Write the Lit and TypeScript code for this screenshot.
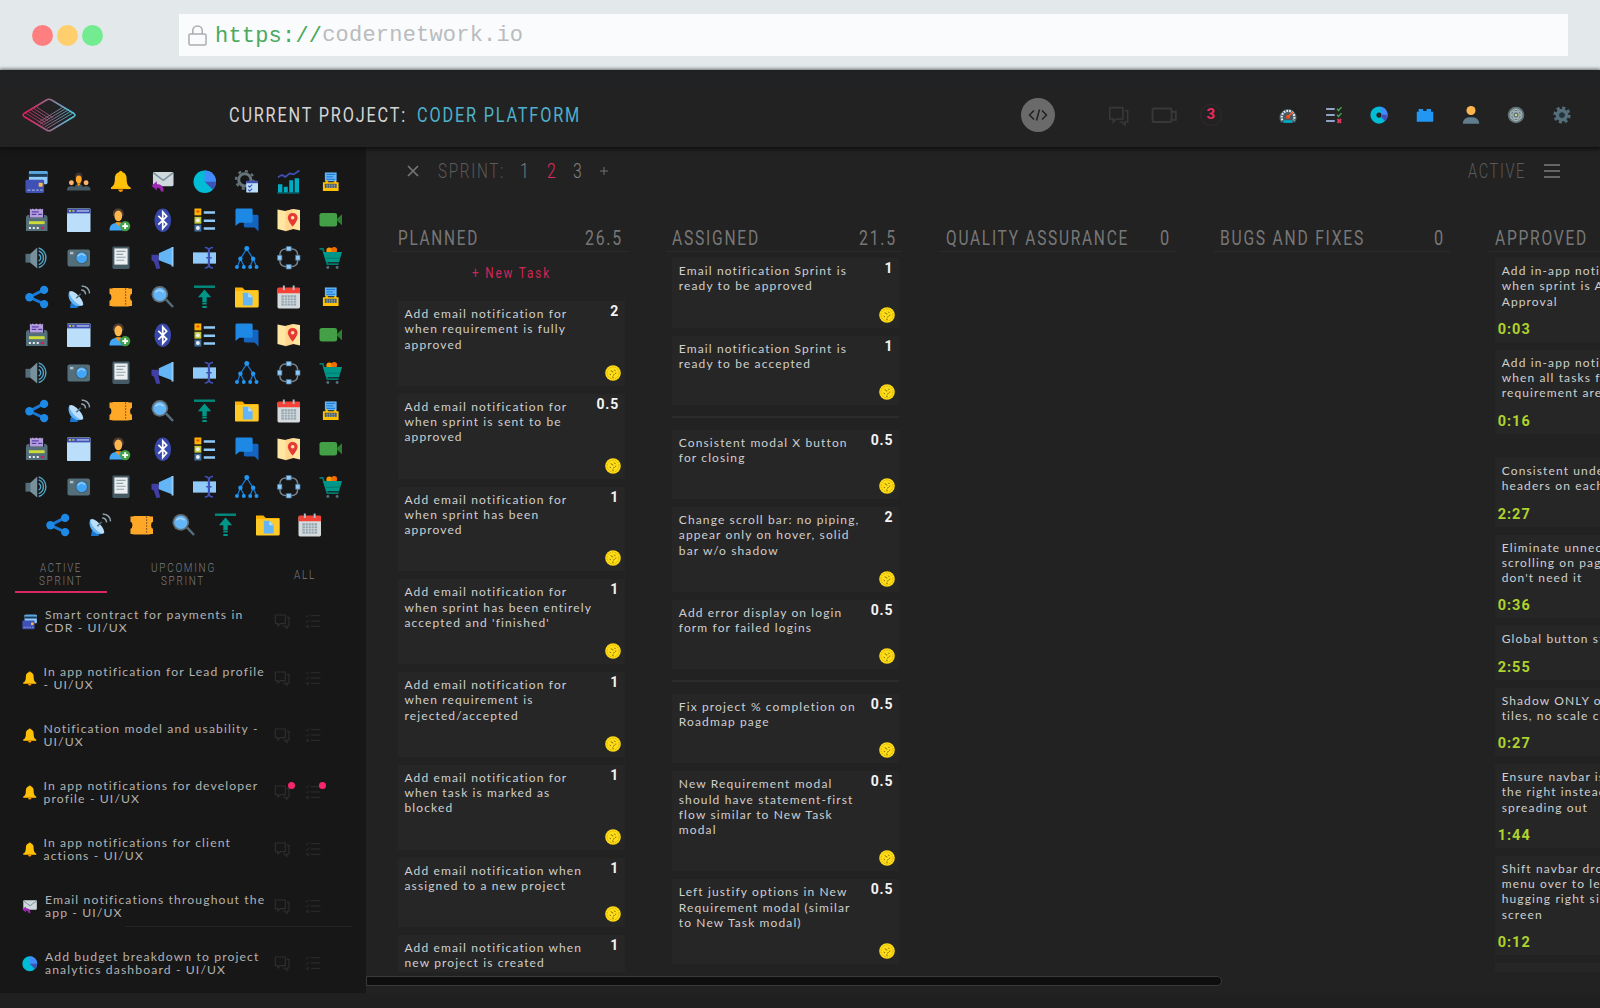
import { LitElement, html, svg, css, nothing, type TemplateResult } from "lit";
import { customElement, property } from "lit/decorators.js";

/* ---------- icon artwork, drawn on a 48 x 48 grid ---------- */
const ICONS: Record<string, TemplateResult> = {
  cards: svg`<rect x="8" y="2" width="38" height="27" rx="3" fill="#90caf9"/><rect x="8" y="2" width="38" height="7" rx="3" fill="#5aa6dd"/><rect x="8" y="8" width="38" height="6" fill="#1c3c5c"/><rect x="1" y="20" width="38" height="27" rx="3" fill="#3f51b5"/><rect x="28" y="26" width="8" height="8" rx="1.5" fill="#ffb74d"/><path d="M5 41h6m3 0h6m3 0h5m3 0h5" stroke="#9fa8da" stroke-width="2.5"/>`,
  team: svg`<ellipse cx="24" cy="13" rx="7.5" ry="8" fill="#3e3330"/><ellipse cx="24" cy="19" rx="6" ry="8" fill="#ffa726"/><circle cx="9" cy="26" r="5" fill="#ffb36b"/><circle cx="39" cy="26" r="5" fill="#ffb36b"/><path d="M0 42c0-8 4-9 9-9 3 0 5 0 6 2 2-5 5-6 9-6s7 1 9 6c1-2 3-2 6-2 5 0 9 1 9 9z" fill="#455a64"/><path d="M20 27h8l-4 6z" fill="#ff9800"/>`,
  bell: svg`<circle cx="24" cy="5" r="3.5" fill="#ffb300"/><path d="M24 4c-8 0-12 6-12 13 0 11-2 15-8 19v3h40v-3c-6-4-8-8-8-19 0-7-4-13-12-13z" fill="#ffc107"/><path d="M4 36h40v3H4z" fill="#ffb300"/><path d="M19 40h10a5 5 0 0 1-10 0z" fill="#ff9800"/>`,
  mail: svg`<rect x="4" y="4" width="42" height="29" rx="3" fill="#cfd8dc"/><path d="M5 6l20 15L45 6" fill="none" stroke="#78909c" stroke-width="3"/><path d="M12 23v6c8 0 14 3 14 15h-6c0-5-2-8-8-8v6L1 32z" fill="#9c27b0"/>`,
  pie: svg`<circle cx="24" cy="24" r="23" fill="#00bcd4"/><path d="M24 24V1a23 23 0 0 1 23 23z" fill="#448aff"/><path d="M24 24h23a23 23 0 0 1-7 16z" fill="#3f51b5"/>`,
  gearlist: svg`<circle cx="20" cy="20" r="12.5" fill="none" stroke="#66757b" stroke-width="6"/><circle cx="20" cy="20" r="18" fill="none" stroke="#66757b" stroke-width="4.5" stroke-dasharray="6 8.1"/><rect x="23" y="23" width="24" height="23" rx="1" fill="#bbdefb"/><path d="M23 22h24v5H23z" fill="#3f51b5"/><path d="M27 32l3 3 5-5m-8 10l3 3 5-5" fill="none" stroke="#3f51b5" stroke-width="2.3"/>`,
  chart: svg`<path d="M2 46V29h9v17zm12 0V34h8v12zm11 0V21h8v25zm11 0V17h9v29z" fill="#00acc1"/><path d="M0 46h46v2H0z" fill="#00838f"/><path d="M2 15l8-5 7 4 9-7 8 2 12-8" fill="none" stroke="#3f51b5" stroke-width="3.5"/>`,
  typer: svg`<path d="M12 5h24v18H12z" fill="#64b5f6"/><path d="M15 9h18m-18 5h14m-14 5h18" stroke="#1976d2" stroke-width="2"/><path d="M8 25h5l2-5 4 5h11l4-5 2 5h4v18H8z" fill="#ffc107"/><rect x="12" y="28" width="24" height="9" rx="1" fill="#455a64"/><path d="M15 31h18m-18 4h18" stroke="#e0e0e0" stroke-width="1.5" stroke-dasharray="3 2"/>`,
  receipt: svg`<path d="M10 1l3 2 3-2 3 2 4-2 4 2 4-2 3 2 3-2v19H10z" fill="#b39ddb"/><path d="M14 8h14m-14 5h9m4 0h8" stroke="#4527a0" stroke-width="2"/><path d="M2 20c0-4 3-6 7-6v6h30v-6c4 0 7 2 7 6v27H2z" fill="#546e7a"/><path d="M8 27h32v6H8z" fill="#cddc39"/><path d="M8 39h4v4H8zm8 0h4v4h-4zm8 0h4v4h-4z" fill="#eceff1"/><path d="M32 39h7v4h-7z" fill="#d81b60"/>`,
  window: svg`<rect width="48" height="48" y="1" rx="1.5" fill="#bbdefb"/><path d="M0 2h48v9H0z" fill="#3f51b5"/><path d="M4 6h4" stroke="#ffd54f" stroke-width="3"/><path d="M11 6h4" stroke="#cddc39" stroke-width="3"/><path d="M20 6h25" stroke="#c5cae9" stroke-width="2.5"/>`,
  useradd: svg`<path d="M8 12C8 5 12 1 19 1s11 4 11 11v4H8z" fill="#4e3b31"/><ellipse cx="19" cy="16" rx="8" ry="11" fill="#ffb74d"/><path d="M1 46c0-12 6-16 18-16s18 4 18 16z" fill="#42a5f5"/><path d="M13 29h12l-6 8z" fill="#ff9800"/><circle cx="33" cy="37" r="10.5" fill="#43a047"/><path d="M33 31v12m-6-6h12" stroke="#fff" stroke-width="4"/>`,
  bluetooth: svg`<ellipse cx="24" cy="25" rx="17" ry="24" fill="#3949ab"/><path d="M15 16l17 17-8 9V8l8 9-17 17" fill="none" stroke="#fff" stroke-width="3.5"/>`,
  list: svg`<path d="M3 1h14v14H3z" fill="#ffb300"/><path d="M3 18h14v14H3z" fill="#c0ca33"/><path d="M3 34h14v14H3z" fill="#3f6fa0"/><path d="M7 5h6v4H7z" fill="#e65100"/><circle cx="10" cy="25" r="4" fill="#eee"/><circle cx="10" cy="41" r="4" fill="#eee"/><path d="M22 9h23M22 26h23M22 42h23" stroke="#90caf9" stroke-width="5"/>`,
  chat: svg`<path d="M18 14h27q3 0 3 3v31l-8-8H21q-3 0-3-3z" fill="#1565c0"/><path d="M4 1h29q3 0 3 3v23q0 3-3 3H9l-8 7V4q0-3 3-3z" fill="#1e88e5"/>`,
  map: svg`<path d="M1 3l16 3 16-4 14 2v42l-14-3-16 4-16-4z" fill="#ffe6a3"/><path d="M17 6v42l16-5V2z" fill="#ffcc80" opacity=".6"/><path d="M32 10c-6 0-10 4-10 10 0 7 10 18 10 18s10-11 10-18c0-6-4-10-10-10z" fill="#e53935"/><circle cx="32" cy="20" r="3.6" fill="#ffe6a3"/>`,
  video: svg`<rect x="1" y="10" width="36" height="28" rx="5" fill="#43a047"/><path d="M37 22l10-9v22l-10-9z" fill="#2e7d32"/>`,
  speaker: svg`<path d="M1 16h12v18H1z" fill="#546e7a"/><path d="M11 16L25 3v43L11 34z" fill="#78909c"/><path d="M28 17a8 8 0 0 1 0 14M28 10a15 15 0 0 1 0 28M28 4a21 21 0 0 1 0 40" fill="none" stroke="#4fa3c4" stroke-width="3"/>`,
  camera: svg`<rect x="1" y="7" width="46" height="35" rx="4" fill="#546e7a"/><rect x="6" y="12" width="7" height="5" fill="#b0bec5"/><circle cx="30" cy="24" r="13" fill="#455a64"/><circle cx="30" cy="24" r="11" fill="#42a5f5"/><path d="M22 21q7-9 15-1" fill="none" stroke="#90caf9" stroke-width="3"/>`,
  doc: svg`<rect x="7" y="1" width="35" height="46" rx="3" fill="#455a64"/><path d="M11 5h27v33H11z" fill="#eceff1"/><path d="M15 11h19m-19 6h14m-14 6h19m-19 6h16" stroke="#90a4ae" stroke-width="2.3"/>`,
  megaphone: svg`<path d="M1 18h13l4 5-3 7 4 16-8 1-5-15-5-3z" fill="#3f3fa5"/><path d="M16 15L44 2v38L16 29z" fill="#64b5f6"/><path d="M42 2h4v40h-4z" fill="#90caf9"/>`,
  rename: svg`<path d="M0 13h47v23H0z" fill="#90caf9"/><path d="M24 3q8 0 8 6v30q0 6-8 6m17-42q-8 0-8 6v30q0 6 8 6M27 24h11" fill="none" stroke="#3f51b5" stroke-width="3.4"/>`,
  tree: svg`<path d="M24 6L11 26 5 42m6-16l8 16M24 6l13 20-6 16m6-16l7 16" fill="none" stroke="#1976d2" stroke-width="2.6"/><g fill="#2196f3"><circle cx="24" cy="5" r="5"/><circle cx="11" cy="26" r="4.5"/><circle cx="37" cy="26" r="4.5"/><circle cx="4" cy="43" r="4"/><circle cx="18" cy="43" r="4"/><circle cx="31" cy="43" r="4"/><circle cx="44" cy="43" r="4"/></g>`,
  cycle: svg`<rect x="6" y="6" width="36" height="36" rx="11" fill="none" stroke="#78828a" stroke-width="3"/><g fill="#90caf9" stroke="#477294" stroke-width="1.5"><path d="M19 1h10v9H19zM19 38h10v9H19zM1 19h9v10H1zM38 19h9v10h-9z"/></g>`,
  cart: svg`<circle cx="21" cy="9" r="6" fill="#ff9800"/><circle cx="31" cy="8" r="6" fill="#ef6c00"/><path d="M1 6h7l9 31h23" fill="none" stroke="#00796b" stroke-width="3.5"/><path d="M8 12h39l-6 21H15z" fill="#009688"/><path d="M15 25h28" stroke="#00796b" stroke-width="2"/><circle cx="18" cy="44" r="3" fill="#546e7a"/><circle cx="37" cy="44" r="3" fill="#546e7a"/>`,
  share: svg`<path d="M40 9L9 25l31 14" fill="none" stroke="#1976d2" stroke-width="6"/><g fill="#1e88e5"><circle cx="9" cy="25" r="8.5"/><circle cx="39" cy="10" r="8.5"/><circle cx="39" cy="39" r="8.5"/></g>`,
  dish: svg`<path d="M8 37l11-4 3 14H6z" fill="#1976d2"/><path d="M5 12c-8 17 11 38 29 29z" fill="#64b5f6"/><ellipse cx="19" cy="27" rx="7" ry="19" transform="rotate(-43 19 27)" fill="#bbdefb"/><path d="M19 27l9-9" stroke="#546e7a" stroke-width="3"/><path d="M29 10q8 0 9 9M30 2q15 1 16 15" fill="none" stroke="#90a4ae" stroke-width="3"/>`,
  ticket: svg`<path d="M1 7q5 1 7-1h31q2 2 8 1v11q-4 1-4 7t4 7v11q-6-1-8 1H8q-2-2-7-1V32q4-1 4-7t-4-7z" fill="#ffa726"/><path d="M34 7v36" stroke="#6d3b14" stroke-width="2" stroke-dasharray="3 3"/>`,
  search: svg`<path d="M31 30l14 15" stroke="#546e7a" stroke-width="5"/><circle cx="18" cy="19" r="17" fill="#616d75"/><circle cx="18" cy="19" r="13.5" fill="#64b5f6"/><path d="M9 15q8-9 17 0" fill="none" stroke="#a8d5fb" stroke-width="3"/>`,
  top: svg`<path d="M2 1h43v5H2z" fill="#00897b"/><path d="M23.500 9L37 25h-9v10h-9V25h-9z" fill="#009688"/><path d="M19 38h9m-9 7h9" stroke="#009688" stroke-width="4"/>`,
  folder: svg`<path d="M0 5h15l5 5h28v34H0z" fill="#ffb300"/><rect x="0" y="12" width="48" height="34" rx="2" fill="#ffca28"/><path d="M16 16h12l8 8v18H16z" fill="#64b5f6"/><path d="M27 16l9 9h-9z" fill="#bbdefb"/>`,
  calendar: svg`<rect x="1" y="6" width="46" height="42" rx="3" fill="#d5dadd"/><path d="M1 8q0-3 3-3h40q3 0 3 3v9H1z" fill="#f44336"/><path d="M14 1v9M34 1v9" stroke="#b0bec5" stroke-width="4"/><path d="M9 21h30v21H9z" fill="#90a4ae"/><path d="M9 26.500h30M9 32h30M9 37h30M15 21v21M21 21v21M27 21v21M33 21v21" stroke="#d5dadd" stroke-width="1.700"/>`,
  gauge: svg`<path d="M5 44a23 23 0 1 1 38 0z" fill="#455a64"/><path d="M9 38a17 17 0 1 1 30 0" fill="none" stroke="#dfe7ea" stroke-width="6" stroke-dasharray="5 2.500"/><path d="M12 38h24v7H12z" fill="#00acc1"/><circle cx="24" cy="29" r="5.500" fill="#e64a19"/><path d="M24 29L37 16" stroke="#ff5722" stroke-width="4"/>`,
  checklist: svg`<path d="M3 8h23M3 24h23M3 40h23" stroke="#90a4c8" stroke-width="5"/><path d="M32 7l4 5 8-9m-12 20l4 5 8-9" fill="none" stroke="#43a047" stroke-width="4"/><path d="M33 35l10 10m0-10L33 45" stroke="#e53962" stroke-width="5"/>`,
  donut: svg`<circle cx="24" cy="24" r="15" fill="none" stroke="#00bcd4" stroke-width="16"/><path d="M27 1a23 23 0 0 1 13 39L30 29q3-5 0-10z" fill="#448aff"/><path d="M47 23a23 23 0 0 1-7 17L30 29q2-2 2-6z" fill="#3f51b5"/>`,
  brick: svg`<path d="M2 15h5V8h12v5h9V8h12v7h6v27H2z" fill="#2196f3"/>`,
  person: svg`<circle cx="24" cy="12" r="12" fill="#ffb74d"/><path d="M2 47c1-12 8-17 22-17s21 5 22 17z" fill="#5f7d8c"/>`,
  globe: svg`<circle cx="24" cy="24" r="22" fill="#62757a"/><g fill="none" stroke="#b4c1c4" stroke-width="2"><circle cx="24" cy="24" r="16"/><ellipse cx="24" cy="24" rx="8" ry="15"/><ellipse cx="24" cy="24" rx="8" ry="15" transform="rotate(60 24 24)"/><ellipse cx="24" cy="24" rx="8" ry="15" transform="rotate(120 24 24)"/></g><circle cx="24" cy="24" r="3" fill="#dce775"/>`,
  gear: svg`<circle cx="24" cy="24" r="12" fill="none" stroke="#546e7a" stroke-width="10"/><circle cx="24" cy="24" r="19" fill="none" stroke="#546e7a" stroke-width="8" stroke-dasharray="8 6.920"/><circle cx="24" cy="24" r="7" fill="#23333f"/>`,
  coin: svg`<circle cx="24" cy="24" r="23.500" fill="#ffde17"/><circle cx="24" cy="24" r="18" fill="none" stroke="#c9a100" stroke-width="2.500" stroke-dasharray="5 3"/><path d="M17 17l4 2m7-5l3 4m-17 9l4 3m6 1l5-3m-8-8l4 1m5 4l4-1m-13 12l5 1" stroke="#8a6d00" stroke-width="3"/>`,
  talk: svg`<g fill="none" stroke="currentColor" stroke-width="3.500"><path d="M4 6h30v26H19l-7 7v-7H4z"/><path d="M39 13h6v26h-6v7l-7-7h-5"/></g>`,
  rows: svg`<path d="M18 8h28M18 24h28M18 40h28" stroke="currentColor" stroke-width="3"/><path d="M2 8l4 4 7-8M2 24l4 4 7-8M5 38h6v5H5z" fill="none" stroke="currentColor" stroke-width="2.500"/>`,
  camline: svg`<g fill="none" stroke="currentColor" stroke-width="3.500"><rect x="1" y="12" width="35" height="25" rx="2"/><path d="M36 18h8v15h-8"/></g>`,
};

/** Inline glyph from the icon set. */
const icon = (name: string, cls = "") =>
  html`<svg class="icon ${cls}" viewBox="0 0 48 48" aria-hidden="true">${ICONS[name]}</svg>`;

/** Condensed display text: `w` is the run width, `cap` the capital height; the box sits on the baseline. */
const display = (text: string, w: number, cap: number, cls = "") => html`<svg
  class="display ${cls}" width=${w} height=${cap}><text x="0" y=${cap} font-size=${cap / 0.711}
  textLength=${w} lengthAdjust="spacingAndGlyphs">${text}</text></svg>`;

const base = css`
  :host { display: block; }
  * { box-sizing: border-box; }
  .icon { display: block; overflow: visible; flex: none; }
  .display { display: block; overflow: visible; flex: none; font-family: Roboto, sans-serif; font-weight: 300; letter-spacing: 2.2px; fill: currentColor; }
`;

/* ---------- browser chrome ---------- */
@customElement("browser-bar")
class BrowserBar extends LitElement {
  static styles = [base, css`
    .bar { height: 70px; background: #e3e9eb; border-bottom: 1px solid #fafcfc; display: flex; align-items: center; padding: 1px 32px 0; }
    .dots { display: flex; gap: 4px; width: 147px; }
    .dot { width: 21px; height: 21px; border-radius: 50%; }
    .red { background: #ff7f80; } .amber { background: #ffcf6d; } .green { background: #73eb90; }
    .url { flex: 1; height: 42px; background: #f9fbfc; display: flex; align-items: center; padding-left: 9px; font: 22px "Liberation Mono", monospace; letter-spacing: 0.2px; color: #b9bcbe; gap: 8px; }
    .url span { position: relative; top: 0.5px; }
    .scheme { color: #4aa95b; }
    .lock { width: 19px; height: 21px; }
  `];
  render() {
    return html`<div class="bar">
      <div class="dots"><i class="dot red"></i><i class="dot amber"></i><i class="dot green"></i></div>
      <div class="url">
        <svg class="lock" viewBox="0 0 20 22" fill="none" stroke="#abaeb0" stroke-width="1.600"><rect x="1" y="9.500" width="18" height="11.500" rx="1.500"/><path d="M5 9.500V6a5 5 0 0 1 10 0v3.500"/></svg>
        <span><span class="scheme">https://</span>codernetwork.io</span>
      </div>
    </div>`;
  }
}

/* ---------- application header ---------- */
@customElement("project-header")
class ProjectHeader extends LitElement {
  static styles = [base, css`
    :host { position: relative; z-index: 2; }
    .header { background: linear-gradient(#1f2123, #222 25px); box-shadow: 0 1px 4px 1px #0e0e0e; display: flex; align-items: center; padding: 13px 29px 0 22px; height: 77px; }
    .logo { width: 54px; height: 34px; }
    .title { display: flex; gap: 10px; margin-left: 153px; color: #d4d4d4; }
    .title .display { font-weight: 400; }
    .accent { color: #4fb0cb; }
    .tools { display: flex; align-items: center; margin-left: auto; color: #383838; }
    .code { width: 34px; height: 34px; border-radius: 50%; background: #6a6a6a; margin-right: 52px; }
    .talk { width: 23px; height: 21px; margin-right: 21px; }
    .cam { width: 28px; height: 26px; margin-right: 20.500px; }
    .count { width: 22px; height: 22px; border-radius: 50%; border: 1.5px solid #33292c; color: #ed2a62; font: bold 15px/19.500px Roboto, sans-serif; text-align: center; }
    .nav { display: flex; gap: 27.700px; margin-left: 57px; }
    .nav .icon { width: 18px; height: 18px; }
  `];
  render() {
    const steps = [1, 2, 3, 4, 5];
    return html`<div class="header">
      <svg class="logo" viewBox="0 0 54 34" fill="none" stroke-linejoin="round" stroke-width="1">
        <defs><linearGradient id="g" gradientUnits="userSpaceOnUse" x1="6" y1="0" x2="50" y2="0"><stop stop-color="#e0245f"/><stop offset=".45" stop-color="#a0668c"/><stop offset="1" stop-color="#52c5dc"/></linearGradient></defs>
        <g stroke="url(#g)"><path stroke-width="1.500" d="M24.500 2Q27 .5 29.500 2L52 15.500q2 1.500 0 3L29.500 32q-2.500 1.500-5 0L2 18.500q-2-1.500 0-3z"/>
        ${steps.map((i) => svg`<path opacity=".8" d=${`M${1.5 + i * 2.6} ${17 - i * 1.6}L${18.5 + i * 2.4} ${27.5 - i * 1.6}`}/><path opacity=".85" d=${`M${27 - i * 2.2} ${32 - i * 1.5}L${52.5 - i * 2.4} ${17 - i * 1.5}`}/>`)}</g>
      </svg>
      <div class="title">${display("CURRENT PROJECT:", 178, 14)}${display("CODER PLATFORM", 164, 14, "accent")}</div>
      <div class="tools">
        <svg class="code" viewBox="0 0 34 34" fill="none" stroke="#222" stroke-width="1.500"><path d="M13 12.500L8.500 17l4.500 4.500M21 12.500l4.500 4.500-4.500 4.500M18.500 11.500l-3 11"/></svg>
        ${icon("talk", "talk")}${icon("camline", "cam")}<span class="count">3</span>
        <nav class="nav">${["gauge", "checklist", "donut", "brick", "person", "globe", "gear"].map((n) => icon(n))}</nav>
      </div>
    </div>`;
  }
}

/* ---------- sidebar ---------- */
const ROW_A = ["cards", "team", "bell", "mail", "pie", "gearlist", "chart", "typer"];
const ROW_B = ["receipt", "window", "useradd", "bluetooth", "list", "chat", "map", "video"];
const ROW_C = ["speaker", "camera", "doc", "megaphone", "rename", "tree", "cycle", "cart"];
const ROW_D = ["share", "dish", "ticket", "search", "top", "folder", "calendar"];
const PALETTE = [...ROW_A, ...ROW_B, ...ROW_C, ...ROW_D, "typer", ...ROW_B, ...ROW_C, ...ROW_D, "typer", ...ROW_B, ...ROW_C, ...ROW_D];

interface Requirement { icon: string; lines: string[]; alert?: boolean; }
const REQUIREMENTS: Requirement[] = [
  { icon: "cards", lines: ["Smart contract for payments in", "CDR - UI/UX"] },
  { icon: "bell", lines: ["In app notification for Lead profile", "- UI/UX"] },
  { icon: "bell", lines: ["Notification model and usability -", "UI/UX"] },
  { icon: "bell", lines: ["In app notifications for developer", "profile - UI/UX"], alert: true },
  { icon: "bell", lines: ["In app notifications for client", "actions - UI/UX"] },
  { icon: "mail", lines: ["Email notifications throughout the", "app - UI/UX"] },
  { icon: "pie", lines: ["Add budget breakdown to project", "analytics dashboard - UI/UX"] },
];

@customElement("side-panel")
class SidePanel extends LitElement {
  static styles = [base, css`
    .panel { width: 366px; height: 846px; background: #171717; padding-top: 16px; overflow: hidden; }
    .palette { display: flex; flex-wrap: wrap; justify-content: center; width: 336px; margin-left: 15.500px; }
    .cell { width: 42px; height: 38.100px; display: grid; place-items: center; }
    .cell .icon { width: 23.500px; height: 23.500px; }
    .tabs { display: flex; margin: 12px 0 0 15px; color: #7d7d7d; }
    .tab { height: 37px; display: flex; flex-direction: column; align-items: center; justify-content: center; gap: 4px; }
    .t1 { width: 92px; border-bottom: 2.500px solid #dc2860; padding-top: 2px; } .t2 { width: 152px; } .t3 { width: 91px; }
    .item { height: 57px; display: flex; align-items: center; padding-left: 22px; color: #b2b2b2; font: 12.200px/13px Lato, sans-serif; letter-spacing: 1.120px; }
    .item > .icon { width: 15.500px; height: 15.500px; }
    .label { width: 236px; padding-left: 6px; white-space: pre; }
    .wide { padding-left: 7.500px; }
    .act { position: relative; color: #2e2e2e; margin-right: 15px; }
    .act .icon { width: 16px; height: 16px; }
    .dot { position: absolute; width: 7px; height: 7px; border-radius: 50%; background: #f5266b; right: -5px; top: -2px; }
    .items { padding-top: 0; }
    .item:last-child { background: linear-gradient(#242424, #242424) 125px -1px / 227px 1px no-repeat; }
    .item:nth-last-child(2) { background: linear-gradient(#242424, #242424) 125px 48px / 227px 1px no-repeat; }
    .item:last-child { background: none; }
  `];
  render() {
    const act = (n: string, alert?: boolean) => html`<span class="act">${icon(n)}${alert ? html`<i class="dot"></i>` : nothing}</span>`;
    return html`<aside class="panel">
      <div class="palette">${PALETTE.map((n) => html`<span class="cell">${icon(n)}</span>`)}</div>
      <div class="tabs">
        <div class="tab t1">${display("ACTIVE", 42, 9)}${display("SPRINT", 44, 9)}</div>
        <div class="tab t2">${display("UPCOMING", 65, 9)}${display("SPRINT", 44, 9)}</div>
        <div class="tab t3">${display("ALL", 22, 9)}</div>
      </div>
      <div class="items">${REQUIREMENTS.map((r) => html`<div class="item">${icon(r.icon)}<span class="label ${r.icon === "bell" ? "" : "wide"}">${r.lines.join("\n")}</span>${act("talk", r.alert)}${act("rows", r.alert)}</div>`)}</div>
    </aside>`;
  }
}

/* ---------- board ---------- */
interface Task { lines: string[]; points?: string; time?: string; group?: boolean; }
const t = (points: string, ...lines: string[]): Task => ({ points, lines });
const g = (task: Task): Task => ({ ...task, group: true });
const done = (time: string, ...lines: string[]): Task => ({ time, lines });

interface Lane { name: string; w: number; total: string; tw: number; tasks: Task[]; add?: boolean; }
const LANES: Lane[] = [
  { name: "PLANNED", w: 81, total: "26.5", tw: 38, add: true, tasks: [
    t("2", "Add email notification for", "when requirement is fully", "approved"),
    t("0.5", "Add email notification for", "when sprint is sent to be", "approved"),
    t("1", "Add email notification for", "when sprint has been", "approved"),
    t("1", "Add email notification for", "when sprint has been entirely", "accepted and 'finished'"),
    t("1", "Add email notification for", "when requirement is", "rejected/accepted"),
    t("1", "Add email notification for", "when task is marked as", "blocked"),
    t("1", "Add email notification when", "assigned to a new project"),
    t("1", "Add email notification when", "new project is created"),
  ] },
  { name: "ASSIGNED", w: 88, total: "21.5", tw: 38, tasks: [
    t("1", "Email notification Sprint is", "ready to be approved"),
    t("1", "Email notification Sprint is", "ready to be accepted"),
    g(t("0.5", "Consistent modal X button", "for closing")),
    t("2", "Change scroll bar: no piping,", "appear only on hover, solid", "bar w/o shadow"),
    t("0.5", "Add error display on login", "form for failed logins"),
    g(t("0.5", "Fix project % completion on", "Roadmap page")),
    t("0.5", "New Requirement modal", "should have statement-first", "flow similar to New Task", "modal"),
    t("0.5", "Left justify options in New", "Requirement modal (similar", "to New Task modal)"),
  ] },
  { name: "QUALITY ASSURANCE", w: 183, total: "0", tw: 11, tasks: [] },
  { name: "BUGS AND FIXES", w: 145, total: "0", tw: 11, tasks: [] },
  { name: "APPROVED", w: 93, total: "", tw: 0, tasks: [
    done("0:03", "Add in-app notification for", "when sprint is Awaiting", "Approval"),
    done("0:16", "Add in-app notification for", "when all tasks for a", "requirement are done"),
    g(done("2:27", "Consistent underlines for", "headers on each page")),
    done("0:36", "Eliminate unnecessary", "scrolling on pages that", "don't need it"),
    done("2:55", "Global button styles"),
    done("0:27", "Shadow ONLY on hover of", "tiles, no scale change"),
    done("1:44", "Ensure navbar is pulled to", "the right instead of", "spreading out"),
    done("0:12", "Shift navbar dropdown", "menu over to left instead of", "hugging right side of", "screen"),
    done("", "", ""),
  ] },
];

@customElement("task-card")
class TaskCard extends LitElement {
  @property({ attribute: false }) task!: Task;
  static styles = [base, css`
    .card { margin-bottom: 8px; background: #262626; padding: 5px 5.500px 5px 6.500px; }
    .top { display: flex; justify-content: space-between; height: max-content; }
    .text { white-space: pre; color: #cfcfcf; font: 12px/15.250px Lato, sans-serif; letter-spacing: 1.120px; flex: none; width: 190px; }
    .pts { font: bold 14px/16px Roboto, sans-serif; letter-spacing: 0.800px; color: #f3f3f3; height: 16px; margin-top: -3px; }
    .coin { width: 16px; height: 16px; margin: 13px -1.500px 0 auto; }
    .time { height: 11px; margin: 15px 0 0 -4px; color: #aed32c; font: bold 14.500px/11px Roboto, sans-serif; letter-spacing: 1px; }
    .done { padding-bottom: 7px; }
  `];
  render() {
    const { lines, points, time } = this.task;
    return html`<article class="card ${points ? "" : "done"}">
      <div class="top"><div class="text">${lines.join("\n")}</div>${points ? html`<span class="pts">${points}</span>` : nothing}</div>
      ${points ? icon("coin", "coin") : html`<div class="time">${time}</div>`}
    </article>`;
  }
}

@customElement("task-board")
class TaskBoard extends LitElement {
  static styles = [base, css`
    .board { width: 1234px; height: 846px; background: #222; overflow: hidden; }
    .bar { display: flex; align-items: center; height: 47px; padding: 0 40px 0 41px; color: #6c6c6c; }
    .x { width: 12px; height: 12px; margin-right: 19px; }
    .nums { display: flex; align-items: center; gap: 16px; margin-left: 15px; color: #808080; }
    .on { color: #e02a60; }
    .plus { width: 8px; height: 8px; }
    .faint { color: #5a5a5a; }
    .state { margin-left: auto; display: flex; align-items: center; gap: 18px; color: #5a5a5a; }
    .menu { width: 16px; height: 16px; color: #666; }
    .lanes { display: flex; gap: 38.300px; padding: 35px 0 0 25.500px; }
    .lane { width: 236px; flex: none; height: 743px; display: flex; flex-direction: column; }
    .head { display: flex; justify-content: space-between; align-items: flex-start; height: 23px; border-bottom: 1px solid #2b2b2b; padding: 2px 5px 0 6px; color: #777; flex: none; }
    .head .display { font-weight: 400; }
    .cards { flex: 1; overflow: hidden; padding: 6px 3px 0 6.500px; }
    .add { display: flex; justify-content: center; height: 43px; padding: 10px 0 0; color: #d02759; }
    .add .display { font-weight: 400; }
    .group { height: 16.500px; padding-top: 3px; }
    .rule { height: 1.500px; background: #2b2b2b; }
    .scroll { width: 856px; height: 10px; border-radius: 0 5px 5px 0; background: #0e0e0e; border: 1px solid #3a3a3a; margin-top: 4px; }
  `];
  render() {
    return html`<main class="board">
      <div class="bar">
        <svg class="x" viewBox="0 0 12 12" stroke="#757575" stroke-width="1.700"><path d="M1 1l10 10M11 1L1 11"/></svg>
        <span class="faint">${display("SPRINT:", 67, 14)}</span>
        <div class="nums">${["1", "2", "3"].map((n) => display(n, 10.5, 14, n === "2" ? "on" : ""))}<svg class="plus" viewBox="0 0 8 8" stroke="#707070"><path d="M4 0v8M0 4h8"/></svg></div>
        <div class="state">${display("ACTIVE", 58, 14)}<svg class="menu" viewBox="0 0 16 16" stroke="currentColor" stroke-width="2"><path d="M0 2h16M0 8h16M0 14h16"/></svg></div>
      </div>
      <div class="lanes">${LANES.map((l) => html`<section class="lane">
        <header class="head">${display(l.name, l.w, 14)}${l.total ? display(l.total, l.tw, 14) : nothing}</header>
        <div class="cards">
          ${l.add ? html`<div class="add">${display("+ New Task", 79, 10)}</div>` : nothing}
          ${l.tasks.map((k) => html`${k.group ? html`<div class="group">${k.points ? html`<div class="rule"></div>` : nothing}</div>` : nothing}<task-card .task=${k}></task-card>`)}
        </div>
      </section>`)}</div>
      <div class="scroll"></div>
    </main>`;
  }
}

@customElement("app-root")
class AppRoot extends LitElement {
  static styles = [base, css`
    .page { width: 1600px; height: 1008px; overflow: hidden; background: #202020; }
    .body { display: flex; }
  `];
  render() {
    return html`<div class="page"><browser-bar></browser-bar><project-header></project-header><div class="body"><side-panel></side-panel><task-board></task-board></div></div>`;
  }
}
